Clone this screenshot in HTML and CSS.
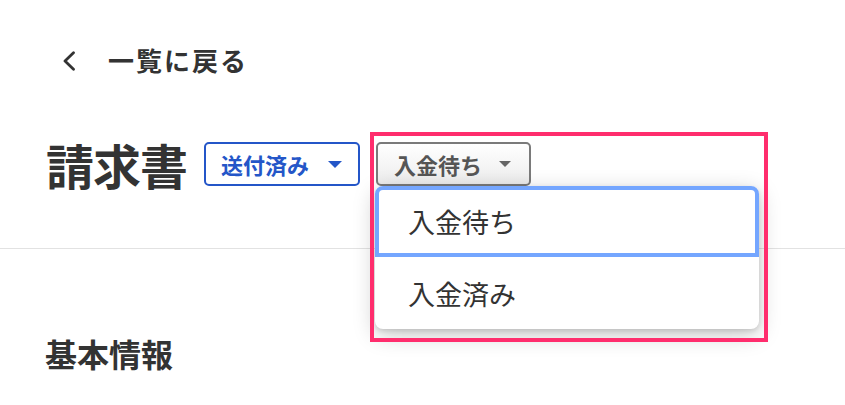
FILE: index.html
```html
<!DOCTYPE html>
<html lang="ja">
<head>
<meta charset="utf-8">
<title>請求書</title>
<link rel="stylesheet" href="styles.css">
</head>
<body>
<header class="header">
  <a class="back" href="#">
    <svg class="back-icon" width="14" height="20" viewBox="0 0 14 20" aria-hidden="true">
      <polyline points="11.5,1.8 3,10 11.5,18.2" fill="none" stroke="#333" stroke-width="2.8" stroke-linecap="round" stroke-linejoin="round"/>
    </svg>
    <span class="back-text">一覧に戻る</span>
  </a>
  <div class="title-row">
    <h1 class="title">請求書</h1>
    <button class="status status-blue" type="button">
      <span>送付済み</span>
      <svg class="caret" width="14" height="7" viewBox="0 0 14 7" aria-hidden="true"><polygon points="0,0 14,0 7,7" fill="#2456c8"/></svg>
    </button>
    <div class="select-wrap">
      <button class="status status-gray" type="button">
        <span>入金待ち</span>
        <svg class="caret" width="12" height="6" viewBox="0 0 12 6" aria-hidden="true"><polygon points="0,0 12,0 6,6" fill="#666"/></svg>
      </button>
      <ul class="menu">
        <li class="option option-active">入金待ち</li>
        <li class="option">入金済み</li>
      </ul>
      <div class="highlight"></div>
    </div>
  </div>
</header>
<section class="section">
  <h2 class="section-title">基本情報</h2>
</section>
</body>
</html>
```
FILE: styles.css
```css
* { box-sizing: border-box; }
html, body { margin: 0; padding: 0; background: #fff; }
body {
  font-family: "Noto Sans CJK JP", "Noto Sans", sans-serif;
  color: #333;
  width: 845px;
  height: 405px;
  overflow: hidden;
}
.header {
  padding: 40px 0 54px 46px;
  border-bottom: 1px solid #e2e2e2;
}
.back {
  display: flex;
  align-items: center;
  height: 40px;
  margin-left: 16px;
  color: #333;
  text-decoration: none;
}
.back-icon { display: block; margin-top: 1px; }
.back-text {
  margin-left: 32px;
  font-size: 26px;
  font-weight: 700;
  letter-spacing: 2px;
  line-height: 40px;
}
.title-row {
  display: flex;
  align-items: center;
  height: 60px;
  margin-top: 54px;
}
.title {
  margin: 0;
  font-size: 48px;
  font-weight: 700;
  line-height: 60px;
  color: #333;
  letter-spacing: -1px;
}
.status {
  display: flex;
  align-items: center;
  flex: none;
  height: 44px;
  border-radius: 5px;
  font-family: inherit;
  font-size: 22px;
  font-weight: 700;
  line-height: 1;
  cursor: pointer;
}
.status-blue {
  margin-left: 17px;
  width: 156px;
  padding: 0 0 0 15px;
  border: 2px solid #2456c8;
  background: #fff;
  color: #2456c8;
}
.status-blue .caret { margin-left: 19px; }
.status-gray {
  width: 155px;
  padding: 0 0 0 16px;
  border: 2px solid #7a7a7a;
  background: linear-gradient(#ffffff, #ececec);
  color: #555;
}
.status-gray .caret { margin-left: 17px; }
.select-wrap {
  position: relative;
  margin-left: 16px;
}
.menu {
  position: absolute;
  left: -1px;
  top: 44px;
  width: 384px;
  margin: 0;
  padding: 0;
  list-style: none;
  background: #fff;
  border-radius: 8px;
  box-shadow: 0 6px 22px rgba(0, 0, 0, 0.22), 0 2px 5px rgba(0, 0, 0, 0.12);
  z-index: 2;
}
.option {
  display: flex;
  align-items: center;
  height: 72px;
  padding-left: 33px;
  font-size: 27px;
  font-weight: 400;
  color: #333;
}
.option-active {
  height: 71px;
  padding-left: 29px;
  border: 4px solid #74a6ff;
  border-radius: 8px 8px 0 0;
}
.highlight {
  position: absolute;
  left: -6px;
  top: -10px;
  width: 398px;
  height: 210px;
  border: 4px solid #ff2d6d;
  pointer-events: none;
  z-index: 3;
}
.section {
  padding: 0 0 0 45px;
}
.section-title {
  margin: 84px 0 0;
  font-size: 32px;
  font-weight: 700;
  line-height: 40px;
  color: #333;
}
```
